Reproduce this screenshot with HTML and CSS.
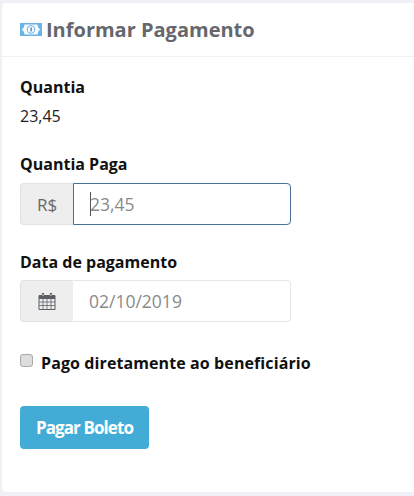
FILE: index.html
```html
<!DOCTYPE html>
<html>
	<head>
		<meta http-equiv="Content-Type" content="text/html; charset=UTF-8" />
		<meta name="viewport" content="initial-scale=1.0">
		<title>Informar Pagamento</title>
		<link rel="stylesheet" href="styles.css">
	</head>
	<body>
		<div class="card">
			<div class="card-head">
				<svg class="money-icon" viewBox="0 0 22 13" width="22" height="13">
					<rect width="22" height="13" fill="#6bb2e6"/>
					<path d="M1.500 6.500 Q4 5.500 4.500 1.500 H17.500 Q18 5.500 20.500 6.500 Q18 7.500 17.500 11.500 H4.500 Q4 7.500 1.500 6.500 Z" fill="#f6fafe"/>
					<circle cx="11" cy="6.500" r="4.200" fill="#6bb2e6"/>
					<circle cx="11" cy="6.500" r="3.200" fill="#f6fafe"/>
					<rect x="10.500" y="4.500" width="1.300" height="4" fill="#3f7fb5"/>
				</svg>
				<h1>Informar Pagamento</h1>
			</div>
			<form class="card-body">
				<div class="field field-amount">
					<label>Quantia</label>
					<p class="amount">23,45</p>
				</div>
				<div class="field field-paid">
					<label>Quantia Paga</label>
					<div class="input-group">
						<span class="addon addon-wide">R$</span>
						<div class="input-wrap">
							<input type="text" class="text-input focused" value="23,45">
							<span class="caret"></span>
						</div>
					</div>
				</div>
				<div class="field field-date">
					<label>Data de pagamento</label>
					<div class="input-group">
						<span class="addon">
							<svg viewBox="0 0 18 18" width="18" height="18">
								<path d="M1 3.500 H17 V17.500 H1 Z" fill="none" stroke="#5a5d62" stroke-width="1"/>
								<path d="M1 3 H17 V7 H1 Z" fill="#5a5d62"/>
								<path d="M1 10 H17 M1 13.500 H17 M5 7 V17.500 M9 7 V17.500 M13 7 V17.500" stroke="#6d7076" stroke-width="0.900"/>
								<path d="M5 1 V4.500 M13 1 V4.500" stroke="#5a5d62" stroke-width="2.200"/>
								<path d="M5 2 V4 M13 2 V4" stroke="#eee" stroke-width="0.800"/>
							</svg>
						</span>
						<div class="input-wrap">
							<input type="text" class="text-input" value="02/10/2019">
						</div>
					</div>
				</div>
				<label class="check-row">
					<input type="checkbox">
					<span>Pago diretamente ao beneficiário</span>
				</label>
				<button type="button" class="btn-pay">Pagar Boleto</button>
			</form>
		</div>
	</body>
</html>
```

FILE: styles.css
```css
html, body { height: 100%; }
body {
	margin: 0;
	padding: 3px 0 4px 2px;
	box-sizing: border-box;
	background-color: #f0f1f7;
	font-family: "Open Sans", sans-serif;
	color: #111;
	overflow: hidden;
}
.card {
	height: 100%;
	background-color: white;
	border-radius: 4px 0 0 4px;
}
.card-head {
	display: flex;
	align-items: center;
	gap: 4px;
	height: 53px;
	padding-left: 18px;
	border-bottom: 1px solid #f0f1f5;
}
.card-head h1 {
	margin: 0;
	font-size: 20px;
	font-weight: 700;
	color: #66676c;
}
.money-icon { flex: none; }
.card-body { padding: 20px 18px 0; }
.field { margin-bottom: 26px; }
.field-amount { margin-bottom: 28px; }
.field-paid { margin-bottom: 27px; }
.field label {
	display: block;
	margin-bottom: 9px;
	font-size: 16px;
	font-weight: 700;
	line-height: 20px;
}
.field-date label { margin-bottom: 8px; }
.amount {
	margin: 0;
	font-size: 16px;
	line-height: 20px;
	color: #222;
}
.input-group {
	display: flex;
	width: 271px;
	height: 42px;
}
.addon {
	display: flex;
	align-items: center;
	justify-content: center;
	flex: none;
	width: 51px;
	background-color: #eee;
	border: 1px solid #e2e2e2;
	border-right: 0;
	border-radius: 4px 0 0 4px;
	font-size: 17px;
	color: #666;
}
.addon-wide { width: 52px; }
.input-wrap {
	position: relative;
	flex: 1;
	display: flex;
}
.text-input {
	width: 100%;
	box-sizing: border-box;
	padding: 0 16px;
	border: 1px solid #e5e6e9;
	border-left-color: #eee;
	border-radius: 0 4px 4px 0;
	font: 17.500px "Open Sans", sans-serif;
	color: #8a8a8a;
	outline: none;
}
.text-input.focused {
	border: 1px solid #4a6f9c;
}
.caret {
	position: absolute;
	left: 17px;
	top: 9px;
	width: 1px;
	height: 24px;
	background-color: #555;
}
.check-row {
	display: flex;
	align-items: center;
	gap: 8px;
	margin-bottom: 32px;
	font-size: 16px;
	font-weight: 700;
	letter-spacing: 0.1px;
	line-height: 22px;
	padding-top: 4px;
}
.check-row input {
	appearance: none;
	flex: none;
	width: 13px;
	height: 13px;
	margin: 0 0 6px;
	background-color: #ddd;
	border: 1px solid #aaa;
	border-radius: 3px;
}
.btn-pay {
	width: 129px;
	height: 43px;
	padding: 0;
	border: 0;
	border-radius: 4px;
	background-color: #42acd6;
	color: white;
	font: 700 17px "Open Sans", sans-serif;
	letter-spacing: -0.9px;
}
```
